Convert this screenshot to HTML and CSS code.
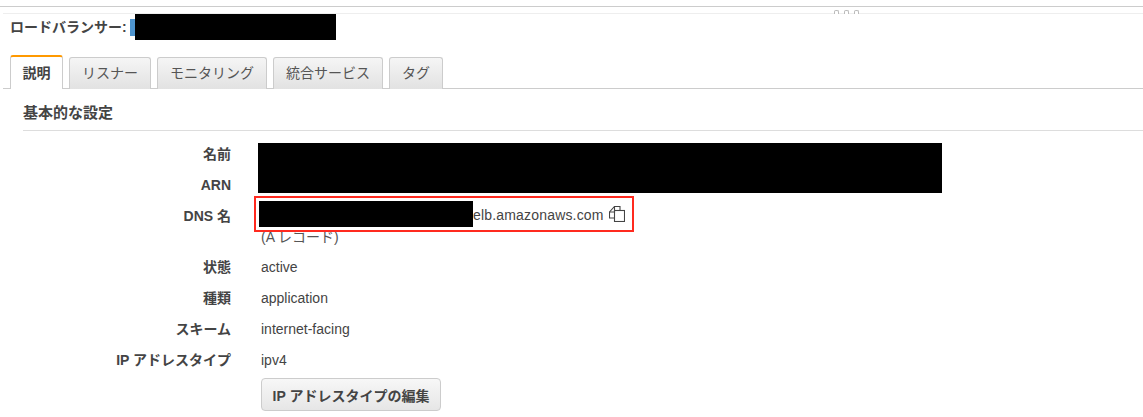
FILE: index.html
```html
<!DOCTYPE html>
<html lang="ja">
<head>
<meta charset="utf-8">
<title>ロードバランサー</title>
<link rel="stylesheet" href="styles.css">
</head>
<body>
<div class="splitter">
  <div class="grip"><i></i><i></i><i></i></div>
</div>
<header class="title">
  <span class="title-label">ロードバランサー:</span>
  <span class="title-chip"></span>
  <span class="redact title-redact"></span>
</header>
<nav class="tabs">
  <a class="tab active">説明</a>
  <a class="tab">リスナー</a>
  <a class="tab">モニタリング</a>
  <a class="tab">統合サービス</a>
  <a class="tab">タグ</a>
</nav>
<section class="panel">
  <h2 class="heading">基本的な設定</h2>
  <div class="rows">
    <span class="redact name-redact"></span>
    <div class="row"><div class="key">名前</div><div class="val"></div></div>
    <div class="row"><div class="key">ARN</div><div class="val"></div></div>
    <div class="row dns-row">
      <div class="key">DNS 名</div>
      <div class="val">
        <div class="dns-box">
          <span class="redact dns-redact"></span><span class="dns-text">elb.amazonaws.com</span>
          <svg class="copy" width="16" height="16" viewBox="0 0 16 16" fill="none" stroke="#444" stroke-width="1.1">
            <path d="M5.500 12H0.500V6L5.500 0.500H11V4.500"/>
            <path d="M5.500 0.500V6H0.500"/>
            <rect x="5.500" y="4.500" width="10" height="11"/>
          </svg>
        </div>
        <div class="record">(A レコード)</div>
      </div>
    </div>
    <div class="row"><div class="key">状態</div><div class="val">active</div></div>
    <div class="row"><div class="key">種類</div><div class="val">application</div></div>
    <div class="row"><div class="key">スキーム</div><div class="val">internet-facing</div></div>
    <div class="row"><div class="key">IP アドレスタイプ</div><div class="val">ipv4</div></div>
    <div class="row btn-row"><div class="key"></div><div class="val"><button class="btn">IP アドレスタイプの編集</button></div></div>
  </div>
</section>
</body>
</html>
```

FILE: styles.css
```css
* { box-sizing: border-box; }
html, body { margin: 0; padding: 0; background: #fff; overflow: hidden; }
body {
  height: 417px;
  font-family: "Liberation Sans", "Noto Sans CJK JP", sans-serif;
  font-size: 14px;
  color: #444;
}
.splitter {
  position: relative;
  height: 8px;
  margin-top: 6px;
  border-top: 1px solid #ccc;
}
.splitter::after {
  content: "";
  position: absolute;
  left: 3px; right: 0; top: 6px;
  height: 1px;
  background: #eee;
}
.grip {
  position: absolute;
  left: 834px;
  top: 3px;
  display: flex;
  gap: 5px;
  z-index: 1;
}
.grip i {
  width: 5px; height: 4px;
  border: 1px solid #bbb;
  border-bottom: 0;
  border-radius: 2px 2px 0 0;
  background: #fff;
}
.title {
  display: flex;
  align-items: center;
  height: 26px;
  padding-left: 10px;
}
.title-label { font-weight: 700; font-size: 14px; color: #444; width: 120px; padding-bottom: 2px; white-space: nowrap; }
.title-chip { width: 5px; height: 17px; background: #4f95cf; }
.redact { display: block; background: #000; }
.title-redact { width: 201px; height: 26px; }
.tabs {
  display: flex;
  align-items: flex-end;
  gap: 6px;
  height: 49px;
  margin-left: 3px;
  padding: 15px 0 0 7px;
  border-bottom: 1px solid #ccc;
}
.tab {
  display: flex;
  align-items: center;
  justify-content: center;
  height: 32px;
  padding-bottom: 3px;
  margin-bottom: -1px;
  border: 1px solid #ccc;
  border-bottom: 0;
  border-radius: 3px 3px 0 0;
  background: linear-gradient(#f5f5f5, #e2e2e2);
  font-size: 14px;
  color: #555;
}
.tab:nth-child(2) { width: 82px; }
.tab:nth-child(3), .tab:nth-child(4) { width: 110px; }
.tab:nth-child(5) { width: 54px; }
.tab.active {
  width: 53px;
  height: 34px;
  border-top: 2px solid #f90;
  background: #fff;
  font-weight: 700;
  color: #444;
}
.panel { padding-left: 23px; }
.heading {
  margin: 0;
  height: 42px;
  line-height: 47px;
  font-size: 15px;
  font-weight: 700;
  color: #444;
  border-bottom: 1px solid #ddd;
}
.rows { position: relative; padding-top: 8px; }
.name-redact {
  position: absolute;
  left: 235px; top: 12px;
  width: 684px; height: 50px;
}
.row {
  display: grid;
  grid-template-columns: 208px 1fr;
  column-gap: 30px;
  height: 31px;
  line-height: 31px;
}
.key { text-align: right; font-weight: 700; font-size: 14px; color: #444; }
.val { font-size: 14px; color: #444; }
.dns-row { height: 51px; }
.dns-box {
  position: relative;
  z-index: 1;
  display: flex;
  align-items: center;
  width: 380px;
  height: 36px;
  margin: -5px 0 0 -7px;
  padding-left: 3px;
  border: 2px solid #ff2a1f;
}
.dns-redact { width: 214px; height: 26px; flex: none; }
.dns-text { letter-spacing: 0.18px; padding-top: 3px; }
.copy { margin-left: 5px; }
.record { margin-top: -4px; line-height: 18px; font-size: 14px; color: #555; }
.btn-row { height: 33px; line-height: normal; margin-top: 2px; }
.btn {
  display: block;
  width: 180px;
  height: 33px;
  padding: 0;
  border: 1px solid #ccc;
  border-radius: 4px;
  background: linear-gradient(#f7f7f7, #e6e6e6);
  font-family: inherit;
  font-size: 14px;
  font-weight: 700;
  color: #444;
}
```
